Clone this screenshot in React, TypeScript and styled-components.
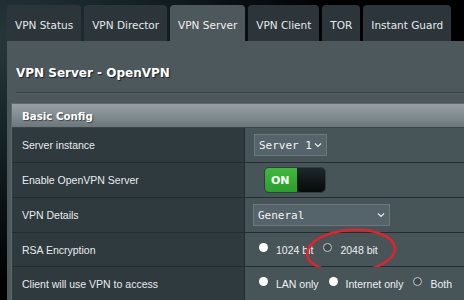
import React from "react";
import styled, { createGlobalStyle } from "styled-components";

const GlobalStyle = createGlobalStyle`
  html, body {
    margin: 0;
    padding: 0;
    background: #000;
  }
  body {
    width: 464px;
    height: 300px;
    overflow: hidden;
    font-family: "DejaVu Sans", Verdana, sans-serif;
  }
`;

const Page = styled.div`
  width: 464px;
  height: 300px;
  overflow: hidden;
  padding: 5px 0 0 7px;
  box-sizing: border-box;
  background: radial-gradient(
    ellipse 340px 240px at 0 40px,
    #26373c 0%,
    #132024 45%,
    #000 100%
  );
`;

const TabBar = styled.div`
  display: flex;
  gap: 3px;
  height: 36px;
`;

const Tab = styled.div<{ $active?: boolean }>`
  display: flex;
  align-items: center;
  padding: 0 8px;
  border-radius: 4px 4px 0 0;
  background: ${(p) => (p.$active ? "#4d585d" : "#2c363a")};
  color: ${(p) => (p.$active ? "#f3eeee" : "#e6e9ea")};
  font-size: 10.5px;
  white-space: nowrap;
  padding-top: 3px;
  box-sizing: border-box;
`;

const Panel = styled.div`
  background: #4d585d;
  padding: 22px 0 0 4px;
  height: 260px;
  box-sizing: border-box;
`;

const Title = styled.div`
  height: 20px;
  line-height: 20px;
  padding-left: 5px;
  color: #fff;
  font-weight: bold;
  font-size: 12px;
  text-shadow: 1px 1px 1px #1c2225;
`;

const Divider = styled.div`
  margin: 9px 0 0 5px;
  height: 1px;
  background: #323c40;
  border-bottom: 1px solid #58646a;
`;

const Table = styled.div`
  margin-top: 9px;
  border-left: 1px solid #5e6a6f;
  border-top: 1px solid #5e6a6f;
`;

const HeaderRow = styled.div`
  height: 23px;
  display: flex;
  align-items: center;
  padding-left: 10px;
  background: linear-gradient(#97a1a5, #6c777c);
  border-bottom: 1px solid #3a4448;
  color: #fff;
  font-weight: bold;
  font-size: 10.25px;
  text-shadow: 1px 1px 1px #3a4448;
`;

const Row = styled.div<{ $h?: number }>`
  display: flex;
  height: ${(p) => p.$h ?? 34}px;
  border-bottom: 1px solid #232c30;
`;

const Label = styled.div`
  width: 222px;
  flex-shrink: 0;
  display: flex;
  align-items: center;
  padding-left: 10px;
  background: #2f3a3e;
  border-right: 1px solid #232c30;
  color: #e9ecec;
  font-family: "Liberation Sans", Arial, sans-serif;
  font-size: 10.5px;
`;

const Cell = styled.div<{ $pad?: number }>`
  position: relative;
  flex: 1;
  display: flex;
  align-items: center;
  padding-left: ${(p) => p.$pad ?? 9}px;
  background: #475559;
`;

const Select = styled.div<{ $w: number }>`
  width: ${(p) => p.$w}px;
  height: 22px;
  box-sizing: border-box;
  display: flex;
  align-items: center;
  justify-content: space-between;
  padding: 0 4px 0 4px;
  background: #55636a;
  border: 1px solid #6b787d;
  color: #f2f4f4;
  font-family: "DejaVu Sans Mono", "Liberation Mono", monospace;
  font-size: 11px;
`;

const Toggle = styled.div`
  display: flex;
  width: 62px;
  height: 26px;
  margin-left: 10px;
  box-sizing: border-box;
  border: 1px solid #323d41;
  border-radius: 5px;
  overflow: hidden;
  background: #1b2326;
`;

const ToggleOn = styled.div`
  width: 32px;
  display: flex;
  align-items: center;
  padding-left: 6px;
  box-sizing: border-box;
  background: linear-gradient(#3fb83c, #2c9e2d);
  color: #fff;
  font-weight: bold;
  font-size: 11px;
`;

const Knob = styled.div`
  flex: 1;
  border-radius: 5px;
  background: linear-gradient(#1e282b, #050909);
`;

const RadioGroup = styled.div`
  display: flex;
  align-items: center;
  font-family: "Liberation Sans", Arial, sans-serif;
  font-size: 10.5px;
  color: #eef0f0;
`;

const RadioItem = styled.label`
  display: flex;
  align-items: center;
  gap: 8px;
  margin-right: 10px;
`;

const Dot = styled.span<{ $checked?: boolean }>`
  width: 9px;
  height: 9px;
  border-radius: 50%;
  box-sizing: border-box;
  margin-top: -4px;
  background: ${(p) => (p.$checked ? "#3b474b" : "#fff")};
  border: ${(p) => (p.$checked ? "1.5px solid #c3c9cb" : "none")};
`;

const Annotation = styled.svg`
  position: absolute;
  left: 59px;
  top: -6px;
  pointer-events: none;
`;

const Chevron = () => (
  <svg width="8" height="6" viewBox="0 0 8 6">
    <polyline points="1,1.5 4,4.5 7,1.5" fill="none" stroke="#e8ecec" strokeWidth="1.2" />
  </svg>
);

const tabs = ["VPN Status", "VPN Director", "VPN Server", "VPN Client", "TOR", "Instant Guard"];

const Radio: React.FC<{ label: string; checked?: boolean }> = ({ label, checked }) => (
  <RadioItem>
    <Dot $checked={checked} />
    {label}
  </RadioItem>
);

export default function App() {
  return (
    <Page>
      <GlobalStyle />
      <TabBar>
        {tabs.map((t) => (
          <Tab key={t} $active={t === "VPN Server"}>
            {t}
          </Tab>
        ))}
      </TabBar>
      <Panel>
        <Title>VPN Server - OpenVPN</Title>
        <Divider />
        <Table>
          <HeaderRow>Basic Config</HeaderRow>
          <Row>
            <Label>Server instance</Label>
            <Cell>
              <Select $w={73}>
                Server 1
                <Chevron />
              </Select>
            </Cell>
          </Row>
          <Row>
            <Label>Enable OpenVPN Server</Label>
            <Cell>
              <Toggle>
                <ToggleOn>ON</ToggleOn>
                <Knob />
              </Toggle>
            </Cell>
          </Row>
          <Row>
            <Label>VPN Details</Label>
            <Cell $pad={8}>
              <Select $w={137}>
                General
                <Chevron />
              </Select>
            </Cell>
          </Row>
          <Row $h={33}>
            <Label>RSA Encryption</Label>
            <Cell $pad={14}>
              <RadioGroup>
                <Radio label="1024 bit" />
                <Radio label="2048 bit" checked />
              </RadioGroup>
              <Annotation width="96" height="50" viewBox="0 0 96 50">
                <ellipse
                  cx="47"
                  cy="24"
                  rx="44"
                  ry="21"
                  fill="none"
                  stroke="#e3222b"
                  strokeWidth="2.5"
                  transform="rotate(-4 47 24)"
                />
              </Annotation>
            </Cell>
          </Row>
          <Row $h={33}>
            <Label>Client will use VPN to access</Label>
            <Cell $pad={14}>
              <RadioGroup>
                <Radio label="LAN only" />
                <Radio label="Internet only" />
                <Radio label="Both" checked />
              </RadioGroup>
            </Cell>
          </Row>
        </Table>
      </Panel>
    </Page>
  );
}
